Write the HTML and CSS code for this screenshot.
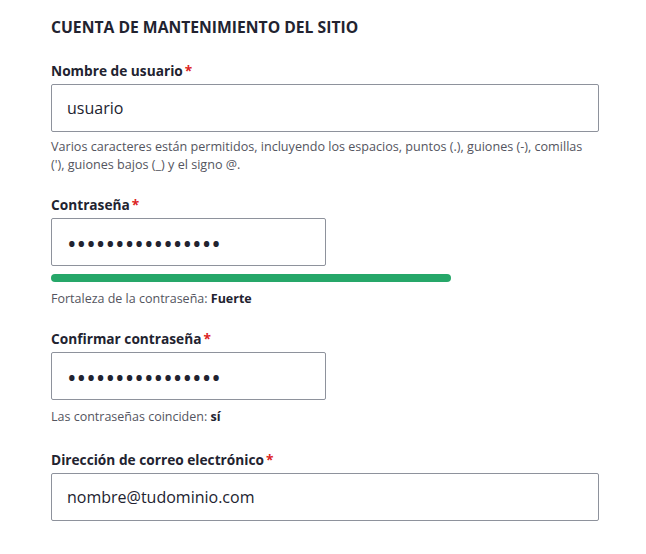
FILE: index.html
```html
<!DOCTYPE html>
<html lang="es">
<head>
  <meta charset="UTF-8" />
  <meta name="viewport" content="width=device-width, initial-scale=1.0" />
  <title>Configurar sitio</title>
  <link rel="stylesheet" href="styles.css">
</head>
<body>

  <form class="install-form">
    <h2>Cuenta de mantenimiento del sitio</h2>

    <!-- Usuario -->
    <div class="form-item">
      <label for="accountName">Nombre de usuario<span class="required">*</span></label>
      <input type="text" id="accountName" class="full" value="usuario" />
      <div class="description">Varios caracteres están permitidos, incluyendo los espacios, puntos (.), guiones (-), comillas ('), guiones bajos (_) y el signo @.</div>
    </div>

    <!-- Contraseña -->
    <div class="form-item">
      <label for="pass1">Contraseña<span class="required">*</span></label>
      <input type="password" id="pass1" class="short" value="contrasenia12345" />
      <div class="strength"><div class="strength-bar" style="width: 100%"></div></div>
      <div class="status">Fortaleza de la contraseña: <strong>Fuerte</strong></div>
    </div>

    <div class="form-item confirm">
      <label for="pass2">Confirmar contraseña<span class="required">*</span></label>
      <input type="password" id="pass2" class="short" value="contrasenia12345" />
      <div class="status">Las contraseñas coinciden: <strong>sí</strong></div>
    </div>

    <!-- Correo -->
    <div class="form-item">
      <label for="accountMail">Dirección de correo electrónico<span class="required">*</span></label>
      <input type="email" id="accountMail" class="full" value="nombre@tudominio.com" />
    </div>
  </form>

</body>
</html>
```

FILE: styles.css
```css
body {
  font-family: "Open Sans", "Noto Sans", sans-serif;
  background-color: #fff;
  color: #222330;
  margin: 0;
}

.install-form {
  padding: 17px 47px 0 51px;
}

.install-form h2 {
  font-size: 15.7px;
  line-height: 20px;
  font-weight: 700;
  text-transform: uppercase;
  margin: 0 0 25px;
}

.form-item {
  margin-bottom: 22px;
}

.form-item.confirm {
  margin-bottom: 25px;
}

.form-item label {
  display: block;
  font-size: 13.7px;
  line-height: 18px;
  font-weight: 700;
  margin-bottom: 4px;
}

.required {
  color: #dc2323;
  margin-left: 2px;
}

.form-item input {
  display: block;
  box-sizing: border-box;
  height: 48px;
  padding: 0 15px;
  font-family: inherit;
  font-size: 16px;
  color: #222330;
  border: 1px solid #8e929c;
  border-radius: 2px;
  background: #fff;
}

.form-item input.full {
  width: 100%;
}

.form-item input.short {
  width: 275px;
  font-size: 25.6px;
  padding-top: 3px;
}

.description {
  margin-top: 6px;
  font-size: 12.6px;
  line-height: 18px;
  color: #545560;
}

.strength {
  width: 400px;
  height: 8px;
  margin-top: 8px;
  border-radius: 4px;
  background: #d3d4d9;
  overflow: hidden;
}

.strength-bar {
  height: 100%;
  background: #26a769;
}

.status {
  margin-top: 8px;
  font-size: 12.5px;
  line-height: 18px;
  color: #545560;
}

.status strong {
  color: #222330;
}
```
